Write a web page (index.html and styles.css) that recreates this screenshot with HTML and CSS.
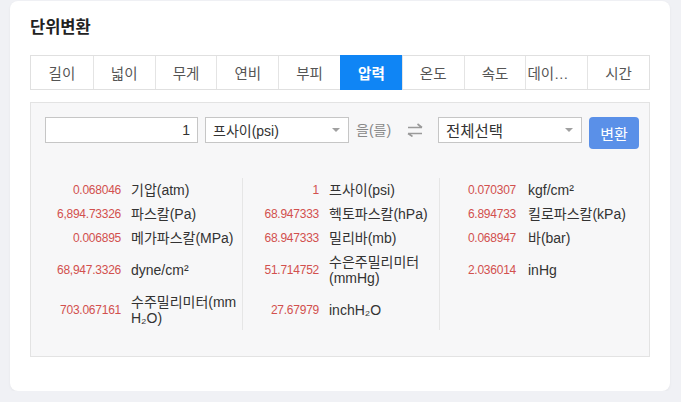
FILE: index.html
```
<!DOCTYPE html>
<html lang="ko">
<head>
  <meta charset="UTF-8">
  <title>단위변환</title>
  <link rel="stylesheet" href="styles.css">
</head>
<body>
  <div class="card">
    <h2 class="title">단위변환</h2>
    <ul class="tabs">
      <li>길이</li>
      <li>넓이</li>
      <li>무게</li>
      <li>연비</li>
      <li>부피</li>
      <li class="active">압력</li>
      <li>온도</li>
      <li>속도</li>
      <li class="clip"><span>데이터양</span></li>
      <li>시간</li>
    </ul>
    <div class="panel">
      <div class="form">
        <input class="num" type="text" value="1">
        <div class="select"><span>프사이(psi)</span><i class="caret"></i></div>
        <span class="particle">을(를)</span>
        <svg class="swap" width="16" height="14" viewBox="0 0 16 14">
          <path d="M1 4.5h14M15 4.5l-4.5-3.5M15 10.5H1M1 10.5l4.5 3" fill="none" stroke="#9a9a9a" stroke-width="1.6"/>
        </svg>
        <div class="select big"><span>전체선택</span><i class="caret"></i></div>
        <button class="btn">변환</button>
      </div>
      <table class="results">
        <colgroup>
          <col class="c-v1"><col class="c-l1"><col class="c-v2"><col class="c-l2"><col class="c-v3"><col>
        </colgroup>
        <tr>
          <td class="val">0.068046</td><td class="lbl sep">기압(atm)</td>
          <td class="val">1</td><td class="lbl sep">프사이(psi)</td>
          <td class="val">0.070307</td><td class="lbl last">kgf/cm²</td>
        </tr>
        <tr>
          <td class="val">6,894.73326</td><td class="lbl sep">파스칼(Pa)</td>
          <td class="val">68.947333</td><td class="lbl sep">헥토파스칼(hPa)</td>
          <td class="val">6.894733</td><td class="lbl last">킬로파스칼(kPa)</td>
        </tr>
        <tr>
          <td class="val">0.006895</td><td class="lbl sep">메가파스칼(MPa)</td>
          <td class="val">68.947333</td><td class="lbl sep">밀리바(mb)</td>
          <td class="val">0.068947</td><td class="lbl last">바(bar)</td>
        </tr>
        <tr>
          <td class="val">68,947.3326</td><td class="lbl sep">dyne/cm²</td>
          <td class="val">51.714752</td><td class="lbl sep">수은주밀리미터<br>(mmHg)</td>
          <td class="val">2.036014</td><td class="lbl last">inHg</td>
        </tr>
        <tr>
          <td class="val">703.067161</td><td class="lbl sep">수주밀리미터(mm<br>H₂O)</td>
          <td class="val">27.67979</td><td class="lbl sep">inchH₂O</td>
          <td class="val"></td><td class="lbl last"></td>
        </tr>
      </table>
    </div>
  </div>
</body>
</html>
```

FILE: styles.css
```
html, body {
  margin: 0;
  padding: 0;
  background: #f0f1f5;
}
body {
  padding: 1px 11px 0 10px;
  font-family: "Liberation Sans", "Noto Sans CJK KR", sans-serif;
  color: #333;
}
.card {
  background: #fff;
  border-radius: 8px;
  box-shadow: 0 1px 3px rgba(0,0,0,0.05);
  padding: 16px 20px 34px 20px;
  height: 340px;
}
.title {
  margin: 0;
  font-size: 16.5px;
  line-height: 20px;
  font-weight: bold;
  color: #222;
}
.tabs {
  list-style: none;
  margin: 18px 0 0 0;
  padding: 0;
  display: grid;
  grid-template-columns: repeat(10, 1fr);
  border: 1px solid #e0e0e0;
  height: 33px;
}
.tabs li {
  display: flex;
  align-items: center;
  justify-content: center;
  font-size: 14.5px;
  color: #555;
  border-left: 1px solid #e4e4e4;
}
.tabs li:first-child {
  border-left: none;
}
.tabs li.active {
  background: #0f85f5;
  color: #fff;
  font-weight: bold;
  border-left-color: #0f85f5;
  margin: -1px 0;
}
.tabs li.clip {
  justify-content: flex-start;
  padding-left: 1px;
}
.tabs li.clip span {
  display: block;
  max-width: 44px;
  overflow: hidden;
  white-space: nowrap;
  text-overflow: ellipsis;
}
.panel {
  margin-top: 12px;
  background: #f7f7f8;
  border: 1px solid #e3e3e3;
  height: 253px;
}
.form {
  display: flex;
  align-items: flex-start;
  gap: 7px;
  padding: 14px 14px 0 14px;
}
.form > * {
  flex-shrink: 0;
}
.num {
  box-sizing: border-box;
  width: 153px;
  height: 26px;
  border: 1px solid #c6c6c6;
  background: #fff;
  text-align: right;
  padding: 0 7px;
  font-family: inherit;
  font-size: 14px;
  color: #333;
  outline: none;
  margin: 0;
}
.select {
  box-sizing: border-box;
  width: 144px;
  height: 26px;
  border: 1px solid #c6c6c6;
  background: #fff;
  display: flex;
  align-items: center;
  justify-content: space-between;
  padding: 0 8px 0 7px;
  font-size: 14px;
  color: #333;
}
.select.big {
  font-size: 15.5px;
}
.caret {
  width: 0;
  height: 0;
  border-left: 4px solid transparent;
  border-right: 4px solid transparent;
  border-top: 4px solid #a0a0a0;
}
.particle {
  width: 36px;
  font-size: 14px;
  line-height: 26px;
  color: #888;
  white-space: nowrap;
}
.swap {
  margin: 6px 8px 0 8px;
}
.btn {
  width: 50px;
  height: 32px;
  border: none;
  border-radius: 4px;
  background: #5a90e8;
  color: #fff;
  font-family: inherit;
  font-size: 15px;
  padding: 0;
  margin: 0;
}
.results {
  margin-top: 29px;
  width: 100%;
  border-collapse: collapse;
  table-layout: fixed;
  font-size: 14px;
  line-height: 16px;
}
.c-v1 { width: 95px; }
.c-l1 { width: 116px; }
.c-v2 { width: 82px; }
.c-l2 { width: 115px; }
.c-v3 { width: 82px; }
.results td {
  padding: 4px 5px;
  vertical-align: middle;
}
.results .val {
  text-align: right;
  color: #d2504e;
  font-size: 12px;
  letter-spacing: -0.25px;
}
.results .lbl {
  color: #333;
}
.results .sep {
  border-right: 1px solid #e6e6e6;
}
.results .last {
  padding-left: 7px;
}
```
